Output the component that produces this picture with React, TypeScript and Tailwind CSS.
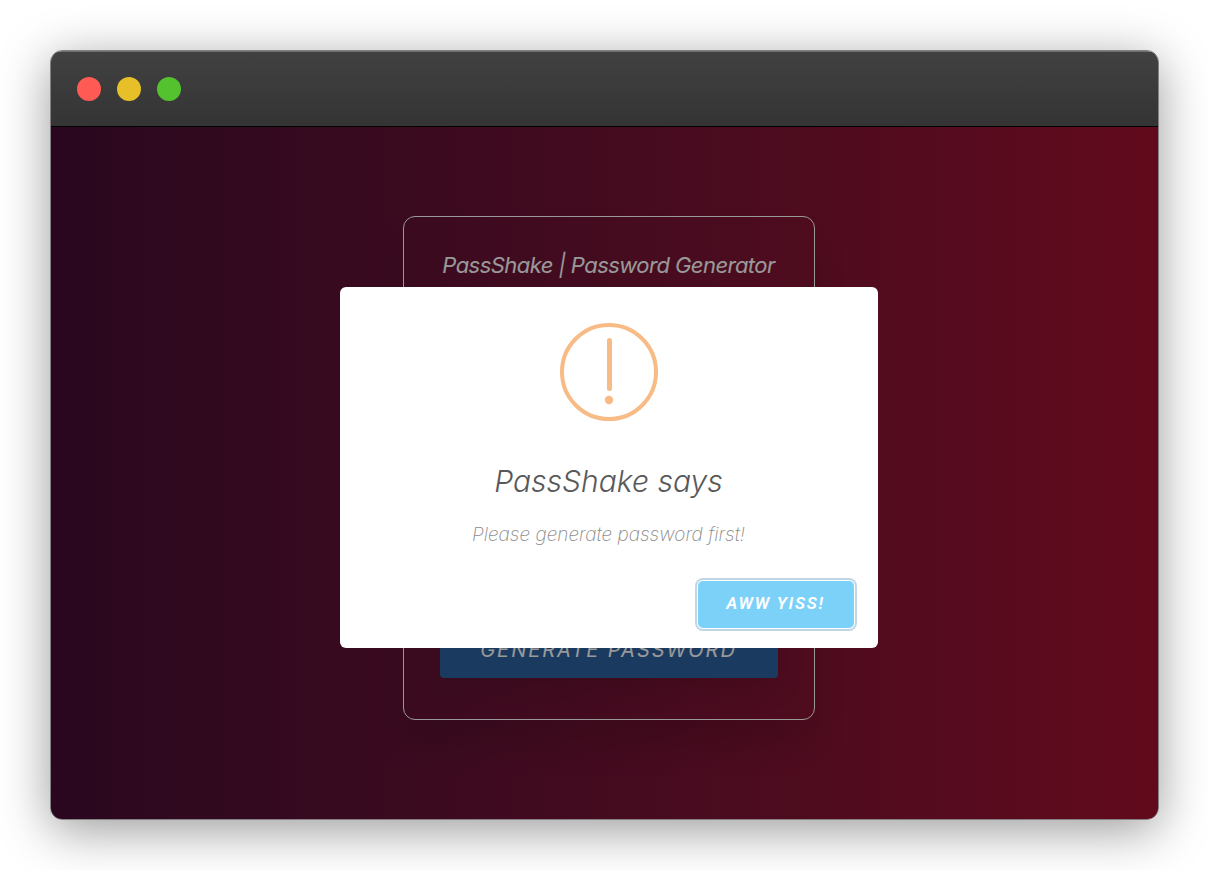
import React from "react";

const INPUT_STYLE = "h-12 rounded border border-white bg-transparent px-3 text-white";

function TitleBar() {
  return (
    <header className="flex h-[76px] items-center gap-4 border-t border-b border-t-[#6f6f6f] border-b-black bg-linear-to-b from-[#414141] to-[#343434] px-[26px]">
      <span className="size-6 rounded-full bg-[#ff5b54]" />
      <span className="size-6 rounded-full bg-[#e6bf29]" />
      <span className="size-6 rounded-full bg-[#54c22e]" />
    </header>
  );
}

function GeneratorCard() {
  return (
    <section className="flex h-[504px] w-[412px] flex-col justify-between rounded-xl border border-white px-9 pt-8 pb-[41px] shadow-[0_25px_35px_rgba(0,0,0,0.12)]">
      <h1 className="text-center text-[22px] leading-8 tracking-tight whitespace-nowrap text-white italic">
        PassShake | Password Generator
      </h1>
      <input aria-label="Password" readOnly className={INPUT_STYLE} />
      <button className="h-14 rounded bg-[#2e629f] text-xl tracking-widest text-white italic shadow-[0_10px_30px_rgba(0,0,0,0.1)]">
        GENERATE PASSWORD
      </button>
    </section>
  );
}

function WarningIcon() {
  return (
    <svg viewBox="0 0 98 98" className="size-[98px]" aria-hidden="true">
      <circle cx="49" cy="49" r="47" fill="none" stroke="#f8bb86" strokeWidth="4" />
      <rect x="47" y="15" width="5" height="53" rx="2.5" fill="#f8bb86" />
      <circle cx="49" cy="77" r="4.2" fill="#f8bb86" />
    </svg>
  );
}

function AlertDialog() {
  return (
    <div
      role="alertdialog"
      aria-labelledby="alert-title"
      aria-describedby="alert-text"
      className="flex w-[538px] flex-col items-center rounded-md bg-white pt-9 pb-5"
    >
      <WarningIcon />
      <h2 id="alert-title" className="mt-9 text-3xl leading-12 font-light text-[#595959] italic">
        PassShake says
      </h2>
      <p id="alert-text" className="mt-4 text-[19px] leading-7 font-extralight text-[#8a8a8a] italic">
        Please generate password first!
      </p>
      <button className="mt-8 mr-6 h-[47px] w-[156px] self-end rounded-[5px] bg-[#7cd1f9] font-[Roboto,sans-serif] text-[17px] font-semibold tracking-widest text-white italic shadow-[0_0_0_1px_#fff,0_0_0_3px_rgba(43,114,165,0.29)]">
        AWW YISS!
      </button>
    </div>
  );
}

export default function App() {
  return (
    <div className="flex min-h-screen bg-white p-[50px] font-[Inter,sans-serif]">
      <div className="flex flex-1 flex-col overflow-hidden rounded-xl border border-[#848084] shadow-[0_10px_50px_rgba(0,0,0,0.4)]">
        <TitleBar />
        <main className="relative grid flex-1 place-items-center bg-linear-to-r from-[#460d34] to-[#a21230] pb-[10px] pl-2">
          <GeneratorCard />
          <div className="absolute inset-0 flex items-center justify-center bg-black/40 pb-3 pl-2">
            <AlertDialog />
          </div>
        </main>
      </div>
    </div>
  );
}
